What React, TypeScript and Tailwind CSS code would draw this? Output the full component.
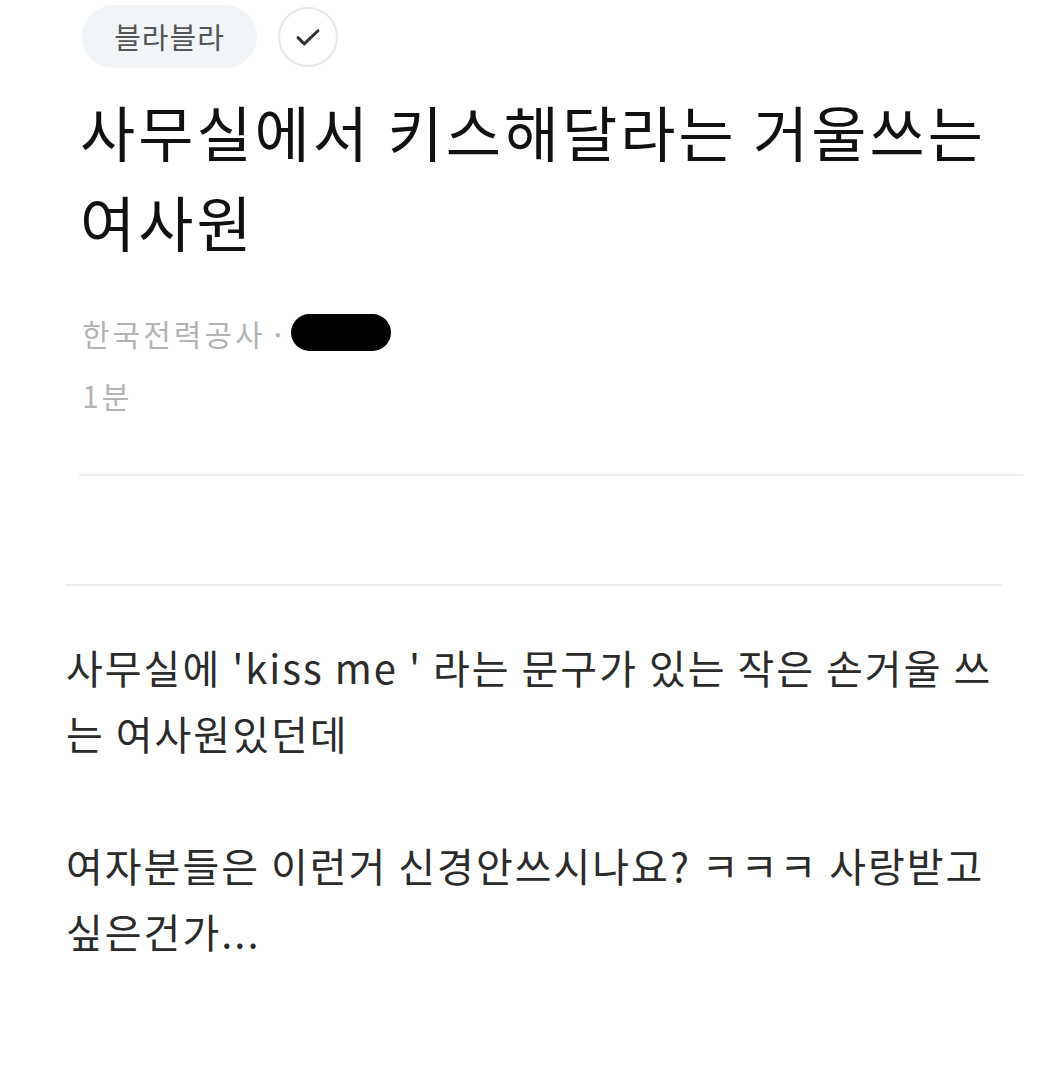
import React from "react";

export default function App() {
  return (
    <div
      className="w-[1046px] h-[1080px] bg-white overflow-hidden relative"
      style={{ fontFamily: '"Noto Sans CJK KR", "Noto Sans", sans-serif' }}
    >
      <div className="pl-[82px] pt-[5px]">
        <div className="flex items-center gap-[21px]">
          <div className="h-[63px] w-[175px] rounded-full bg-[#f2f5f8] flex items-center justify-center text-[29px] tracking-[1px] text-[#555555]">
            블라블라
          </div>
          <div className="h-[60px] w-[60px] rounded-full border-2 border-[#e6e6e6] flex items-center justify-center">
            <svg width="30" height="30" viewBox="0 0 24 24" fill="none" stroke="#333" strokeWidth="2.4" strokeLinecap="round" strokeLinejoin="round">
              <path d="M4 12.5l5 5L20 7" />
            </svg>
          </div>
        </div>
        <div className="mt-[18px] -ml-[2px] text-[60px] leading-[90px] text-[#111111] tracking-[3px] whitespace-nowrap">
          <div>사무실에서 키스해달라는 거울쓰는</div>
          <div>여사원</div>
        </div>
        <div className="mt-[48px] text-[30px] tracking-[3px] text-[#b3b3b3] leading-[36px]">
          <div className="flex items-center">
            <span>한국전력공사</span>
            <span className="ml-[4px] mr-[2px]">·</span>
            <span className="inline-block w-[100px] h-[37px] rounded-full bg-black"></span>
          </div>
          <div className="mt-[26px]">1분</div>
        </div>
      </div>
      <div className="mt-[61px] ml-[79px] mr-[23px] h-[2px] bg-[#eeeeee]" />
      <div className="mt-[108px] ml-[65px] mr-[44px] h-[2px] bg-[#eeeeee]" />
      <div className="pl-[66px] mt-[48px] text-[40px] leading-[66px] tracking-[2px] text-[#2b2b2b] whitespace-nowrap">
        <div>사무실에 'kiss me ' 라는 문구가 있는 작은 손거울 쓰</div>
        <div>는 여사원있던데</div>
        <div className="h-[66px]" />
        <div>여자분들은 이런거 신경안쓰시나요? ㅋㅋㅋ 사랑받고</div>
        <div>싶은건가...</div>
      </div>
    </div>
  );
}
